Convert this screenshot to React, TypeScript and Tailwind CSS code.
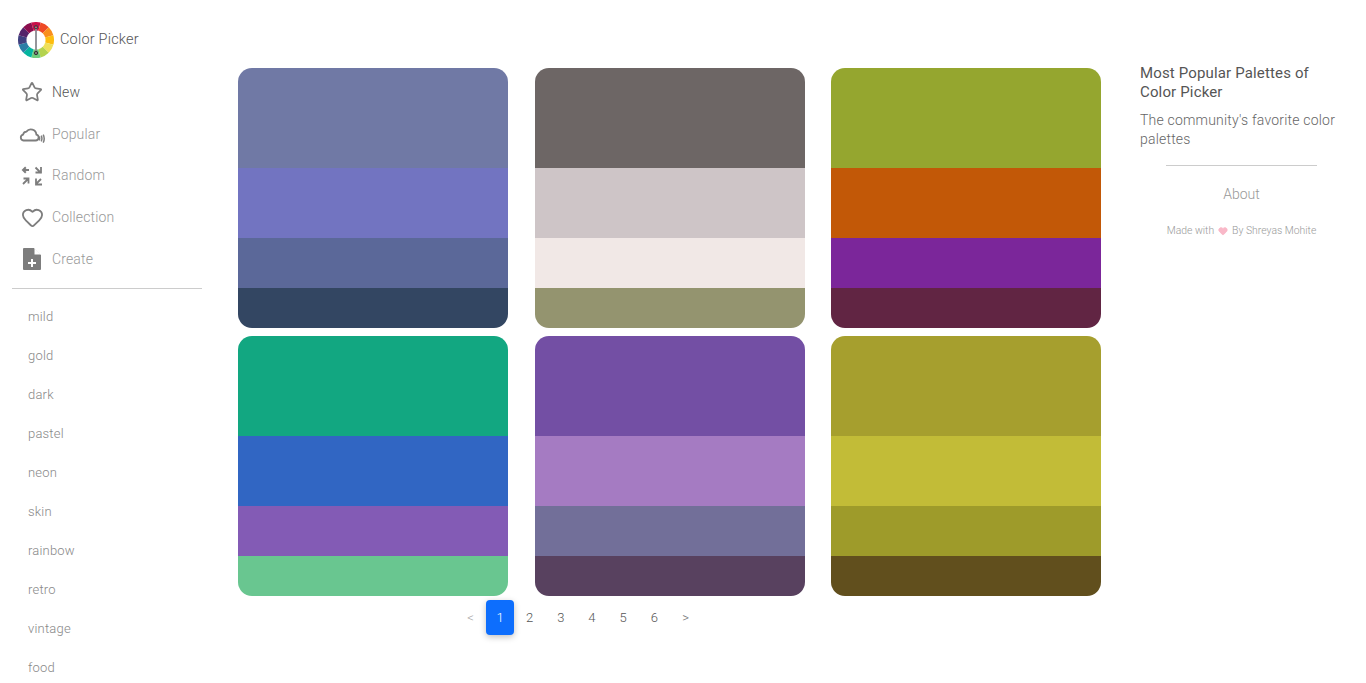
import React from "react";
import { Star, Heart } from "lucide-react";

const wheelColors = [
  "#c9104a", "#ee4a26", "#f98f1d", "#fdbd0f", "#efe05a", "#b4d34e",
  "#6ecb7c", "#05b5a0", "#2a7ea6", "#3f4080", "#54246a", "#8c0e4e",
];

function wedge(i: number) {
  const c = 18;
  const ro = 18;
  const ri = 9.5;
  const a0 = ((i * 30 - 15 - 90) * Math.PI) / 180;
  const a1 = ((i * 30 + 15 - 90) * Math.PI) / 180;
  const p = (r: number, a: number) => `${c + r * Math.cos(a)} ${c + r * Math.sin(a)}`;
  return `M${p(ro, a0)} A${ro} ${ro} 0 0 1 ${p(ro, a1)} L${p(ri, a1)} A${ri} ${ri} 0 0 0 ${p(ri, a0)}Z`;
}

function Logo() {
  return (
    <svg width="36" height="36" viewBox="0 0 36 36" className="shrink-0">
      {wheelColors.map((color, i) => (
        <path key={i} d={wedge(i)} fill={color} />
      ))}
      <line x1="18" y1="5" x2="18" y2="31" stroke="#8a8a90" strokeWidth="1.8" />
      <circle cx="18" cy="5" r="1.7" fill="none" stroke="#444" strokeWidth="1" />
      <circle cx="18" cy="31" r="1.7" fill="#777" stroke="#333" strokeWidth="1" />
    </svg>
  );
}

function CloudIcon() {
  return (
    <svg width="26" height="19" viewBox="0 0 26 19" fill="none" stroke="#7d7d7d" strokeWidth="1.8">
      <path d="M4.5 15.5h12.2a3 3 0 0 0 .7-5.9A5.6 5.6 0 0 0 7.4 6.6a3.6 3.6 0 0 0-3.3 3A3 3 0 0 0 4.5 15.5z" />
      <path d="M20.2 11.6c.6 1.2.6 2.5 0 3.7M22.2 10.6c.9 1.8.9 4 0 5.8M24.2 9.6c1.3 2.6 1.3 5.5 0 8" strokeWidth="1.5" />
    </svg>
  );
}

function RandomIcon() {
  return (
    <svg width="22" height="20" viewBox="0 0 22 20" fill="none" stroke="#7d7d7d" strokeWidth="2">
      <path d="M8 4H2M4.8 1.2L2 4l2.8 2.8" />
      <path d="M14.5 1.5L20 7M14.5 6.5h5.5V1" strokeWidth="1.8" />
      <path d="M2 18l5-5M2.5 12.5H7.5V17.5" strokeWidth="1.8" />
      <path d="M20 13l-5 5M15 12.5v6h6" strokeWidth="1.8" />
    </svg>
  );
}

function FileIcon() {
  return (
    <svg width="18" height="22" viewBox="0 0 18 22">
      <path d="M1 0h10l7 7v14a1 1 0 0 1-1 1H1a1 1 0 0 1-1-1V1a1 1 0 0 1 1-1z" fill="#7d7d7d" />
      <path d="M11.5 0l6.5 6.5h-6.5z" fill="#fff" />
      <path d="M8 11h2v3h3v2h-3v3H8v-3H5v-2h3z" fill="#fff" />
    </svg>
  );
}

const nav = [
  { label: "New", icon: <Star size={22} strokeWidth={1.9} color="#7d7d7d" />, active: true },
  { label: "Popular", icon: <CloudIcon /> },
  { label: "Random", icon: <RandomIcon /> },
  { label: "Collection", icon: <Heart size={23} strokeWidth={1.9} color="#7d7d7d" /> },
  { label: "Create", icon: <FileIcon /> },
];

const tags = ["mild", "gold", "dark", "pastel", "neon", "skin", "rainbow", "retro", "vintage", "food"];

const palettes = [
  ["#7079a5", "#7274c1", "#5b6899", "#334662"],
  ["#6d6665", "#cec5c7", "#f1e8e6", "#94946f"],
  ["#95a62f", "#c25807", "#7b269a", "#612543"],
  ["#12a781", "#3166c3", "#835bb5", "#69c690"],
  ["#734fa4", "#a57bc2", "#726f99", "#58415f"],
  ["#a69f2e", "#c2bc37", "#9e9b2a", "#614f1d"],
];

export default function App() {
  return (
    <div className="flex h-screen overflow-hidden bg-white font-['Roboto',sans-serif] font-light">
      <aside className="w-[214px] shrink-0 pl-3">
        <div className="flex items-center gap-1.5 pl-1.5 pt-[22px] text-[14.5px] text-[#555] tracking-[0.2px]">
          <Logo />
          Color Picker
        </div>
        <nav className="mt-[19.25px] flex flex-col gap-[11.75px] w-[190px]">
          {nav.map((item) => (
            <div key={item.label} className={`flex h-[30px] items-center text-[14px] tracking-[0.15px] ${item.active ? "text-[#555]" : "text-[#999]"}`}>
              <span className="flex w-10 justify-center">{item.icon}</span>
              {item.label}
            </div>
          ))}
        </nav>
        <div className="mt-[14px] w-[190px] border-t border-[#ccc]" />
        <ul className="mt-5 flex flex-col gap-[23px] pl-4 text-[13px] leading-[16px] text-[#888] tracking-[0.2px]">
          {tags.map((tag) => (
            <li key={tag}>{tag}</li>
          ))}
        </ul>
      </aside>

      <main className="w-[887px] shrink-0 pl-6 pt-[68px]">
        <div className="grid grid-cols-[270px_270px_270px] gap-x-[26.5px] gap-y-2">
          {palettes.map((colors, i) => (
            <div key={i} className="flex h-[260px] flex-col overflow-hidden rounded-[14px]">
              <div className="h-[100px]" style={{ backgroundColor: colors[0] }} />
              <div className="h-[70px]" style={{ backgroundColor: colors[1] }} />
              <div className="h-[50px]" style={{ backgroundColor: colors[2] }} />
              <div className="h-[40px]" style={{ backgroundColor: colors[3] }} />
            </div>
          ))}
        </div>
        <div className="ml-[217px] mt-1 flex items-center text-[13px] text-[#555]">
          <span className="w-[31px] text-center text-[#aaa]">&lt;</span>
          <span className="flex h-[35px] w-[28px] items-center justify-center rounded bg-[#0d6efd] text-white shadow-[0_2px_6px_rgba(0,0,0,0.25)]">1</span>
          {[2, 3, 4, 5, 6].map((n) => (
            <span key={n} className="w-[31.2px] text-center">{n}</span>
          ))}
          <span className="w-[31.2px] text-center text-[#777]">&gt;</span>
        </div>
      </main>

      <aside className="ml-[39px] w-[203px] shrink-0 pt-[64px]">
        <h2 className="text-[15px] leading-[19px] font-normal text-[#555] tracking-[0.15px]">Most Popular Palettes of Color Picker</h2>
        <p className="mt-[9px] text-[14px] leading-[19px] text-[#666] tracking-[0.2px]">The community's favorite color palettes</p>
        <div className="mx-auto mt-[16px] w-[151px] border-t border-[#ccc]" />
        <p className="mt-[19px] text-center text-[14px] leading-[18px] text-[#999]">About</p>
        <p className="mt-[21px] flex items-center justify-center gap-1 text-[10.4px] leading-[14px] text-[#999]">
          Made with <Heart size={10} fill="#f9b8c8" stroke="#f9b8c8" /> By Shreyas Mohite
        </p>
      </aside>
    </div>
  );
}
